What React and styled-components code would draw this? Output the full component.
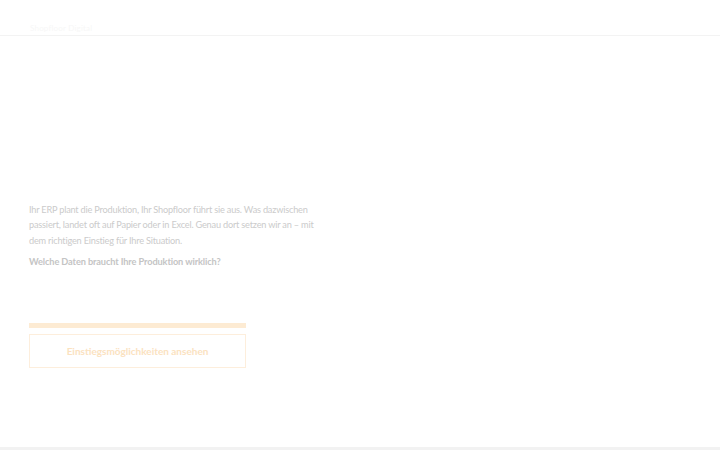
import React from "react";
import styled, { createGlobalStyle } from "styled-components";

const Global = createGlobalStyle`
  html, body { margin: 0; padding: 0; background: #ffffff; }
  body { font-family: "Lato", "Noto Sans", sans-serif; }
  #root { min-height: 450px; }
`;

const Page = styled.div`
  display: flex;
  flex-direction: column;
  height: 450px;
  overflow: hidden;
`;

const Header = styled.header`
  height: 36px;
  flex: none;
  border-bottom: 1px solid #f3f3f3;
  display: flex;
  align-items: flex-end;
  padding: 0 30px 2px;
  box-sizing: border-box;
`;

const Brand = styled.span`
  font-size: 8px;
  color: #f7f7f7;
  letter-spacing: 0.2px;
`;

const Main = styled.main`
  flex: 1;
  display: flex;
  flex-direction: column;
  padding: 166px 29px 0;
`;

const Intro = styled.p`
  margin: 0;
  width: 330px;
  font-size: 9.2px;
  line-height: 15.3px;
  letter-spacing: -0.2px;
  color: #cbcbcb;
`;

const Question = styled.p`
  margin: 8px 0 0;
  font-size: 9.2px;
  font-weight: 700;
  letter-spacing: -0.1px;
  color: #c4c4c4;
`;

const Cta = styled.div`
  margin-top: 56px;
  width: 217px;
  display: flex;
  flex-direction: column;
  gap: 6px;
`;

const Accent = styled.div`
  height: 5px;
  background: #fdebd3;
`;

const Button = styled.button`
  height: 34px;
  border: 1px solid #fdeedc;
  background: #ffffff;
  color: #fbe2bf;
  font-family: inherit;
  font-size: 10px;
  font-weight: 700;
  cursor: pointer;
`;

const Footer = styled.footer`
  height: 3px;
  flex: none;
  background: #f2f2f2;
`;

export default function App() {
  return (
    <Page>
      <Global />
      <Header>
        <Brand>Shopfloor Digital</Brand>
      </Header>
      <Main>
        <Intro>
          Ihr ERP plant die Produktion, Ihr Shopfloor führt sie aus. Was dazwischen
          <br />
          passiert, landet oft auf Papier oder in Excel. Genau dort setzen wir an – mit
          <br />
          dem richtigen Einstieg für Ihre Situation.
        </Intro>
        <Question>Welche Daten braucht Ihre Produktion wirklich?</Question>
        <Cta>
          <Accent />
          <Button>Einstiegsmöglichkeiten ansehen</Button>
        </Cta>
      </Main>
      <Footer />
    </Page>
  );
}
